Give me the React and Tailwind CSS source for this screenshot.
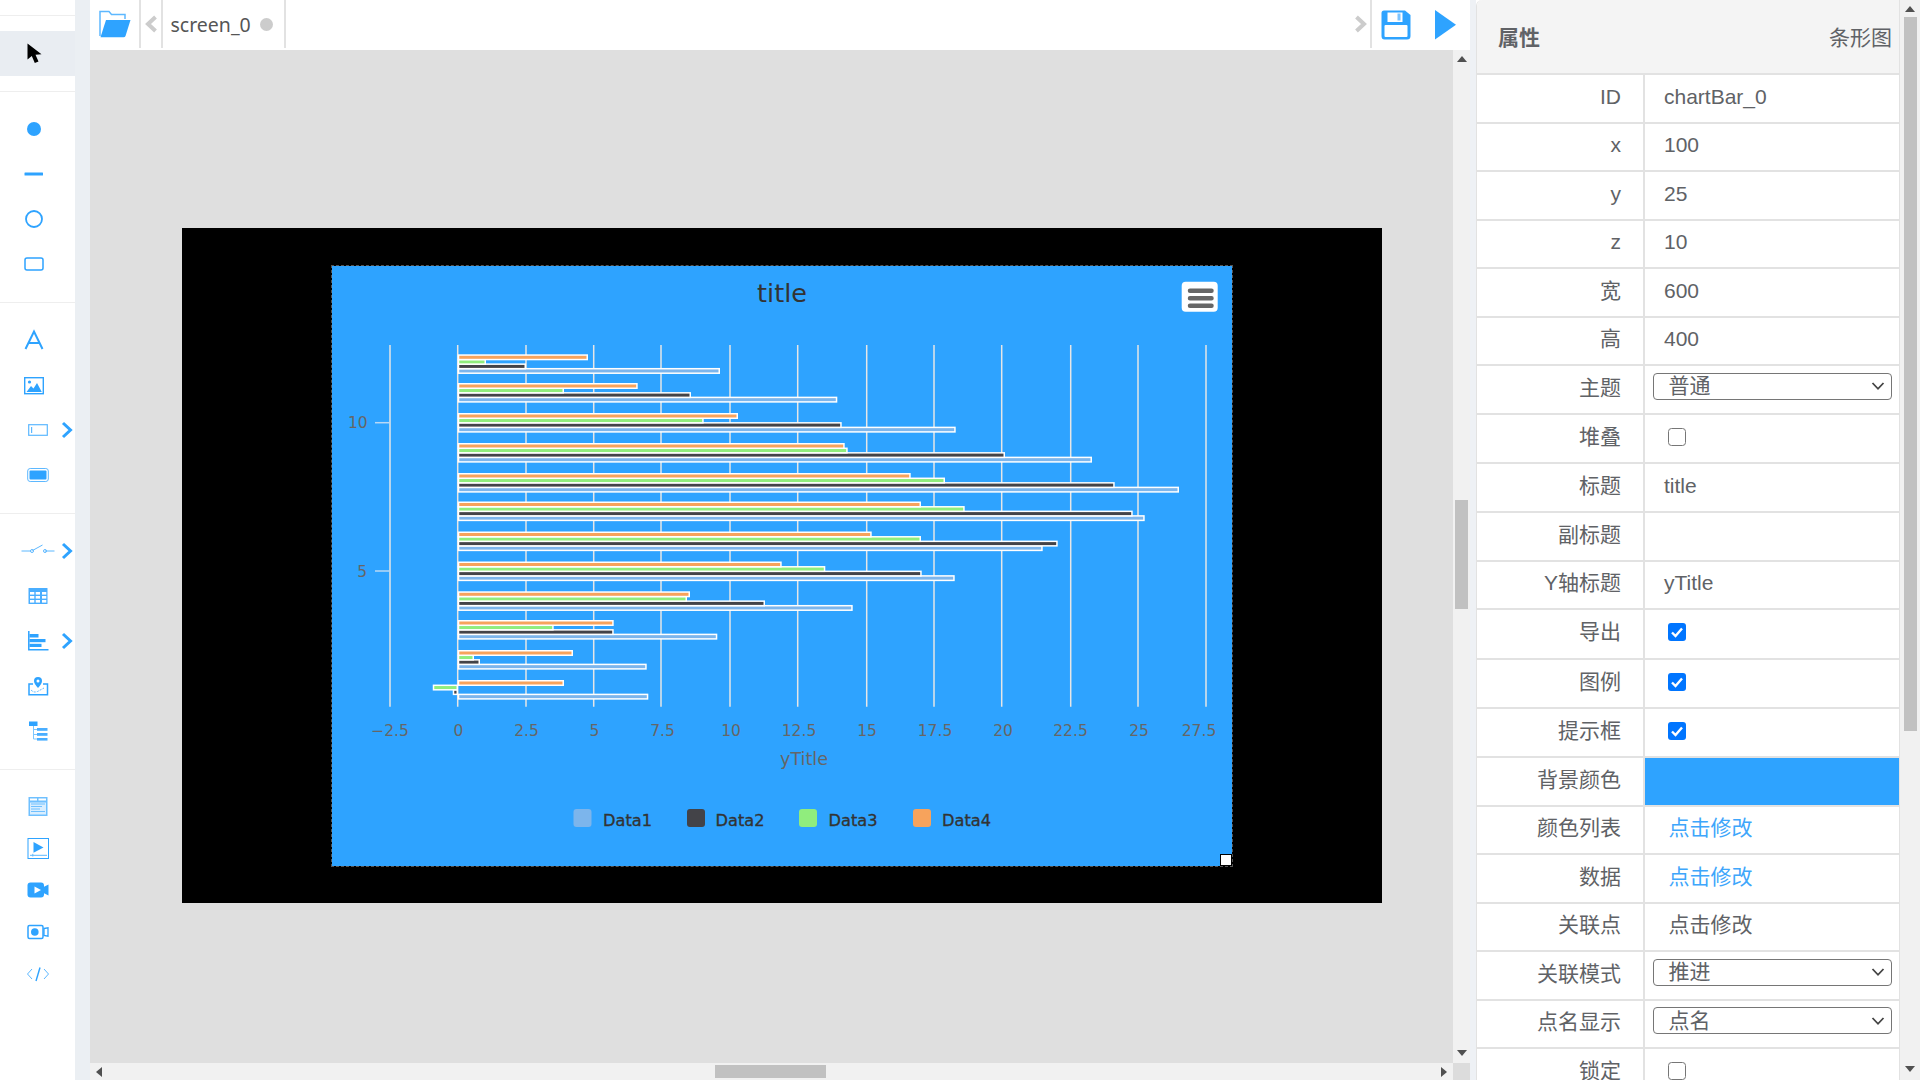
const BLUE = "#2ea3ff";

function Ic({ w = 28, children }) {
  return (
    <svg width={w} height="28" viewBox={`0 0 ${w} 28`} fill="none" className="shrink-0">
      {children}
    </svg>
  );
}

const icons = {
  dot: <Ic><circle cx="14" cy="14" r="7" fill={BLUE} /></Ic>,
  line: <Ic><rect x="4.5" y="12.5" width="18.5" height="3" rx="0.5" fill={BLUE} /></Ic>,
  ring: <Ic><circle cx="14" cy="14" r="8" stroke={BLUE} strokeWidth="1.8" /></Ic>,
  rect: <Ic><rect x="5" y="8" width="18" height="12" rx="2" stroke={BLUE} strokeWidth="1.5" /></Ic>,
  text: <Ic><path d="M5.5 23 L14 5.5 L22.5 23 M8.5 17 H19.5" stroke={BLUE} strokeWidth="2" /></Ic>,
  image: (
    <Ic>
      <rect x="4.7" y="6.7" width="18.6" height="16" stroke={BLUE} strokeWidth="1.4" />
      <circle cx="9.5" cy="11" r="1.6" fill={BLUE} />
      <path d="M6.5 21 L11 15 L13.5 17.5 L17 12 L21.8 21Z" fill={BLUE} />
    </Ic>
  ),
  input: (
    <Ic>
      <rect x="4.7" y="8.7" width="18.6" height="10.6" stroke="#5db8ff" strokeWidth="1.2" />
      <rect x="7" y="11" width="1.2" height="6" fill="#5db8ff" />
    </Ic>
  ),
  button: (
    <Ic>
      <rect x="3.7" y="7.5" width="20.6" height="13" rx="2.5" stroke="#5db8ff" strokeWidth="1" />
      <rect x="5.5" y="9.5" width="17" height="9" rx="1" fill={BLUE} />
    </Ic>
  ),
  sw: (
    <Ic w={40}>
      <path d="M3.5 14 H13 M14.5 13.5 L24.5 8 M27 14 H36.5" stroke="#5db8ff" strokeWidth="1" />
      <circle cx="14" cy="14" r="1.5" stroke="#5db8ff" strokeWidth="1" />
      <circle cx="27" cy="14" r="1.5" stroke="#5db8ff" strokeWidth="1" />
    </Ic>
  ),
  table: (
    <Ic>
      <rect x="4.5" y="6" width="19" height="16" rx="0.5" fill="#4aaeff" />
      {[10, 14, 18].map((y) =>
        [6, 11.7, 18].map((x) => <rect key={`${x}-${y}`} x={x} y={y} width="4.3" height="2.6" fill="#fff" />)
      )}
    </Ic>
  ),
  bar: (
    <Ic>
      <path d="M4.8 4 V22.8 H24.5" stroke={BLUE} strokeWidth="1.5" />
      <rect x="5.5" y="7" width="9" height="3.5" fill={BLUE} />
      <rect x="5.5" y="12" width="16" height="3.2" fill={BLUE} />
      <rect x="5.5" y="16.8" width="12" height="3.2" fill={BLUE} />
    </Ic>
  ),
  map: (
    <Ic>
      <path d="M9 12 H5 V22.7 H23.5 V12 H19" stroke={BLUE} strokeWidth="1.5" />
      <path d="M7 18 Q10 21 13.5 19.5 L20 16" stroke="#5db8ff" strokeWidth="1" strokeDasharray="2 1.2" />
      <path d="M14 16 C11.5 13 10 11.2 10 9 A4 4 0 0 1 18 9 C18 11.2 16.5 13 14 16Z" fill={BLUE} />
      <circle cx="14" cy="9" r="1.5" fill="#fff" />
    </Ic>
  ),
  tree: (
    <Ic>
      <rect x="5" y="4.5" width="8.5" height="4.5" fill={BLUE} />
      <path d="M9.5 9 V22 H13 M9.5 12.5 H13 M9.5 17.5 H13" stroke="#7cc6ff" strokeWidth="1" />
      <rect x="13" y="11" width="10.5" height="2.8" fill="#4aaeff" />
      <rect x="13" y="16" width="10.5" height="2.8" fill="#4aaeff" />
      <rect x="13" y="21" width="10.5" height="2.6" fill="#4aaeff" />
    </Ic>
  ),
  doc: (
    <Ic>
      <rect x="4.5" y="5" width="19" height="19" fill="#6fc0ff" />
      <rect x="6" y="6.5" width="7" height="2" fill="#fff" />
      <rect x="14.5" y="6.5" width="7.5" height="2" fill="#fff" />
      <rect x="6" y="10.5" width="16" height="12" fill="#d9eeff" />
      <path d="M7 12 H21 M7 14.5 H18 M7 17 H16 M7 19.5 H21" stroke="#6fc0ff" strokeWidth="1.2" />
    </Ic>
  ),
  play: (
    <Ic>
      <rect x="4" y="4.5" width="20.5" height="20" stroke={BLUE} strokeWidth="1" />
      <path d="M9.5 8 L19.5 13.5 L9.5 18.8Z" fill={BLUE} />
      <path d="M6 21.3 H23 M8.8 19.8 V22.5" stroke="#5db8ff" strokeWidth="1" />
    </Ic>
  ),
  video: (
    <Ic>
      <rect x="3.5" y="6.5" width="16.5" height="15" rx="3" fill={BLUE} />
      <path d="M19.5 11 L24.5 8.5 V19.5 L19.5 17Z" fill={BLUE} />
      <path d="M10.5 10.5 L17 14 L10.5 17.5Z" fill="#fff" />
    </Ic>
  ),
  record: (
    <Ic>
      <rect x="4" y="7.5" width="15" height="13" rx="1.5" stroke={BLUE} strokeWidth="1.5" />
      <circle cx="10.8" cy="14" r="3.8" fill={BLUE} />
      <path d="M20 10.5 L24 9.8 V18.2 L20 17.5Z" stroke={BLUE} strokeWidth="1.3" />
    </Ic>
  ),
  code: (
    <Ic>
      <path d="M8 9 L3.5 14 L8 19 M20 9 L24.5 14 L20 19" stroke="#5db8ff" strokeWidth="1" />
      <path d="M16 7.5 L12 21" stroke={BLUE} strokeWidth="1.4" />
    </Ic>
  ),
};

function Item({ icon, narrow, more, tall }) {
  return (
    <div className={`relative flex items-center ${tall ? "h-[42px]" : "h-[45px]"}`}>
      <div className={`flex justify-center ${narrow ? "w-[68px]" : "w-[75px]"}`}>{icons[icon]}</div>
      {more && (
        <svg width="12" height="18" viewBox="0 0 12 18" fill="none" className="absolute left-[61px] top-[14px]">
          <path d="M2 2 L9.5 9 L2 16" stroke={BLUE} strokeWidth="3" />
        </svg>
      )}
    </div>
  );
}

function Sidebar() {
  return (
    <div className="flex h-full w-[75px] shrink-0 flex-col bg-white">
      <div className="h-[16px] border-b border-[#eeeeee]" />
      <div className="mt-[15px] flex h-[45px] items-center justify-center bg-[#e9edf2] pb-[2px] pr-[6px]">
        <svg width="20" height="20" viewBox="0 0 20 20">
          <path d="M2.5 0.5 L2.5 16.5 L6.8 13 L9.8 20 L13.5 18.4 L10.5 11.8 L16.5 11.2 Z" fill="#000" />
        </svg>
      </div>
      <div className="mt-[15px] border-t border-[#eeeeee] pt-[14px] pb-[16px]">
        <Item icon="dot" narrow />
        <Item icon="line" narrow />
        <Item icon="ring" narrow />
        <Item icon="rect" narrow />
      </div>
      <div className="border-t border-[#eeeeee] pt-[14px] pb-[16px]">
        <Item icon="text" narrow />
        <Item icon="image" narrow />
        <Item icon="input" more />
        <Item icon="button" />
      </div>
      <div className="border-t border-[#eeeeee] pt-[14px] pb-[16px]">
        <Item icon="sw" more />
        <Item icon="table" />
        <Item icon="bar" more />
        <Item icon="map" />
        <Item icon="tree" />
      </div>
      <div className="border-t border-[#eeeeee] pt-[15px]">
        <Item icon="doc" tall />
        <Item icon="play" tall />
        <Item icon="video" tall />
        <Item icon="record" tall />
        <Item icon="code" tall />
      </div>
    </div>
  );
}

function TopBar() {
  return (
    <div className="flex h-[50px] shrink-0 items-start bg-white">
      <div className="flex h-[48px] w-[51px] items-center border-r-2 border-[#e2e2e2] pl-[9px]">
        <svg width="32" height="28" viewBox="0 0 32 28" fill="none">
          <path d="M1 26 V1.5 H10 L12.5 4.5 H26 V9" stroke="#5db8ff" strokeWidth="1.5" />
          <path d="M7 10 H31.5 L26.5 26 Q26 27.2 24.5 27.2 H1.5 Z" fill={BLUE} />
        </svg>
      </div>
      <div className="flex h-[48px] w-[22px] items-center justify-center border-r-2 border-[#e2e2e2]">
        <svg width="13" height="18" viewBox="0 0 13 18" fill="none">
          <path d="M10.5 2 L3 9 L10.5 16" stroke="#cccccc" strokeWidth="4" />
        </svg>
      </div>
      <div className="flex h-[48px] w-[122.5px] items-center border-r-2 border-[#e2e2e2] pl-[7.5px] pt-[1px] font-['Noto_Sans','Noto_Sans_CJK_SC',sans-serif] text-[19.5px] text-[#555555]">
        <span>screen_0</span>
        <span className="ml-[9px] h-[13.5px] w-[13.5px] rounded-full bg-[#cccccc]" />
      </div>
      <div className="flex h-[48px] flex-1 items-center justify-end border-r-2 border-[#e2e2e2] pr-[3px]">
        <svg width="13" height="18" viewBox="0 0 13 18" fill="none">
          <path d="M2.5 2 L10 9 L2.5 16" stroke="#cccccc" strokeWidth="4" />
        </svg>
      </div>
      <div className="ml-[9px] flex h-[48px] items-start pt-[10px]">
        <svg width="30" height="30" viewBox="0 0 30 30">
          <path d="M3 0.5 H24 L29.5 5 V26 Q29.5 29.5 26 29.5 H3.5 Q0.5 29.5 0.5 26 V3 Q0.5 0.5 3 0.5Z" fill={BLUE} />
          <rect x="6.5" y="2.5" width="15" height="9.5" fill="#fff" />
          <rect x="16.5" y="3.5" width="3" height="7" fill="#7cc4ff" />
          <rect x="3.5" y="15" width="23" height="12" rx="1" fill="#fff" />
        </svg>
      </div>
      <div className="ml-[24.5px] mr-[14px] flex h-[48px] items-start pt-[10px]">
        <svg width="21" height="30" viewBox="0 0 21 30">
          <path d="M0 0 L21 14.7 L0 29.5Z" fill={BLUE} />
        </svg>
      </div>
    </div>
  );
}

const gridXs = [390, 457.7, 526, 593.7, 661, 730, 797.7, 866.7, 934, 1001.7, 1070.7, 1138, 1206];
const xLabels = ["−2.5", "0", "2.5", "5", "7.5", "10", "12.5", "15", "17.5", "20", "22.5", "25", "27.5"];
const labelXs = [390, 458.5, 526.5, 594.5, 662.5, 731, 799, 867, 935, 1003, 1070.5, 1139, 1199];
const x0 = 458.5;
// orange, green, dark, blue outer right ends, by category from the top
const ends = [
  [588, 486, 526, 720],
  [637.7, 564, 691, 837.3],
  [738, 703.7, 841.7, 955.7],
  [844.7, 847.7, 1005, 1092],
  [910.7, 945, 1114.7, 1179],
  [921, 964.7, 1132.7, 1144.7],
  [871.7, 921, 1057.7, 1042.7],
  [781.7, 825.3, 921.7, 954.7],
  [690, 687, 765, 852.7],
  [613.7, 553.7, 613.7, 717.3],
  [573, 474, 480, 646.7],
  [564, 458, 458, 648.3],
];
const tops = [357.3, 386, 416, 446, 476, 504.5, 534.5, 564.5, 594.3, 623, 653, 683];
const colors = ["#f7a35c", "#90ed7d", "#434348", "#7cb5ec"];
const legend = [
  ["Data1", "#7cb5ec", 573.5, 603],
  ["Data2", "#434348", 687, 715.5],
  ["Data3", "#90ed7d", 799, 828.5],
  ["Data4", "#f7a35c", 913, 942],
];

function Bars() {
  const out = [];
  ends.forEach((row, g) => {
    [3, 2, 1, 0].forEach((s) => {
      const y = tops[g] + s * 4.55 - 2.25;
      let xa = x0;
      let xb = row[s] - 0.75;
      if (g === 11 && s === 1) xa = 433.5;
      if (g === 11 && s === 2) xa = 453.5;
      out.push(
        <rect key={`${g}-${s}`} x={xa} y={y} width={xb - xa} height="4.5" fill={colors[s]} stroke="#ffffff" strokeWidth="1.5" />
      );
    });
  });
  return out;
}

function Chart() {
  return (
    <svg width="900" height="600" viewBox="332 266 900 600" className="block font-['DejaVu_Sans',sans-serif]">
      <rect x="332" y="266" width="900" height="600" fill={BLUE} />
      <text x="782" y="301.5" textAnchor="middle" fill="#333333" className="text-[25.5px]">title</text>
      <rect x="1181.7" y="281.7" width="36" height="30" rx="4" fill="#ffffff" />
      <path d="M1190 290.7 H1211.5 M1190 298.2 H1211.5 M1190 305.7 H1211.5" stroke="#666666" strokeWidth="4.5" strokeLinecap="round" />
      {gridXs.map((x) => (
        <line key={x} x1={x} x2={x} y1="345" y2="706.7" stroke="#e6e6e6" strokeWidth="1.5" />
      ))}
      <line x1="375" x2="390" y1="422.7" y2="422.7" stroke="#b9d8f5" strokeWidth="1.5" />
      <line x1="375" x2="390" y1="571" y2="571" stroke="#b9d8f5" strokeWidth="1.5" />
      <Bars />
      <text x="367.7" y="427.7" textAnchor="end" fill="#666666" className="text-[15.5px]">10</text>
      <text x="367" y="577" textAnchor="end" fill="#666666" className="text-[15.5px]">5</text>
      {xLabels.map((t, i) => (
        <text key={t} x={labelXs[i]} y="736" textAnchor="middle" fill="#666666" className="text-[15.5px]">{t}</text>
      ))}
      <text x="804" y="765" textAnchor="middle" fill="#666666" className="text-[17.5px]">yTitle</text>
      {legend.map(([name, c, sx, tx]) => (
        <g key={name}>
          <rect x={sx} y="809" width="18" height="18" rx="3" fill={c} />
          <text x={tx} y="826" fill="#333333" stroke="#333333" strokeWidth="0.35" className="text-[16.2px]">{name}</text>
        </g>
      ))}
    </svg>
  );
}

function Arrow({ dir }) {
  const d = { up: "M0 7 L5 1 L10 7Z", down: "M0 1 L5 7 L10 1Z", left: "M7 0 L1 5 L7 10Z", right: "M1 0 L7 5 L1 10Z" }[dir];
  return (
    <svg width="10" height="10" viewBox="0 0 10 10" className="block">
      <path d={d} fill="#505050" />
    </svg>
  );
}

function Canvas() {
  return (
    <div className="flex min-h-0 flex-1 flex-col">
      <div className="flex min-h-0 flex-1">
        <div className="min-w-0 flex-1 overflow-hidden bg-[#dfdfdf] pl-[92px] pt-[178px]">
          <div className="h-[675px] w-[1200px] bg-black pl-[149px] pt-[37px]">
            <div className="relative w-[902px] border border-dashed border-[#555555]">
              <Chart />
              <div className="absolute bottom-0 right-0 h-[12px] w-[12px] border border-black bg-white" />
            </div>
          </div>
        </div>
        <div className="flex w-[17px] shrink-0 flex-col items-center bg-[#f1f1f1]">
          <div className="mt-[5px] h-[8px]"><Arrow dir="up" /></div>
          <div className="mt-[437px] h-[109px] w-[13px] bg-[#c1c1c1]" />
          <div className="mt-[440px]"><Arrow dir="down" /></div>
        </div>
      </div>
      <div className="flex h-[17px] shrink-0 items-center bg-[#f1f1f1]">
        <div className="ml-[5px]"><Arrow dir="left" /></div>
        <div className="ml-[610px] h-[13px] w-[111px] bg-[#c1c1c1]" />
        <div className="ml-[614px]"><Arrow dir="right" /></div>
        <div className="ml-auto h-[17px] w-[17px] bg-[#dcdcdc]" />
      </div>
    </div>
  );
}

function Box({ checked }) {
  if (checked) {
    return (
      <svg width="18" height="18" viewBox="0 0 18 18" className="ml-[23px] block">
        <rect width="18" height="18" rx="3" fill="#0075ff" />
        <path d="M4 9.5 L7.5 13 L14 5.5" fill="none" stroke="#fff" strokeWidth="2.4" />
      </svg>
    );
  }
  return <div className="ml-[23px] h-[18px] w-[18px] rounded-[3.5px] border-[1.5px] border-[#767676] bg-white" />;
}

function Sel({ text }) {
  return (
    <div className="mb-[3px] ml-[8px] flex h-[27px] w-[238.5px] items-center justify-between rounded-[4px] border-[1.5px] border-[#767676] pl-[14.5px] pr-[6px]">
      <span className="leading-[24px]">{text}</span>
      <svg width="14" height="10" viewBox="0 0 14 10" fill="none">
        <path d="M1.5 2 L7 7.8 L12.5 2" stroke="#444444" strokeWidth="1.8" />
      </svg>
    </div>
  );
}

const rows = [
  ["ID", "h-[49px]", "text", "chartBar_0"],
  ["x", "h-[48px]", "text", "100"],
  ["y", "h-[49px]", "text", "25"],
  ["z", "h-[48px]", "text", "10"],
  ["宽", "h-[49px]", "text", "600"],
  ["高", "h-[48px]", "text", "400"],
  ["主题", "h-[49px]", "sel", "普通"],
  ["堆叠", "h-[49px]", "box", false],
  ["标题", "h-[49px]", "text", "title"],
  ["副标题", "h-[49px]", "text", ""],
  ["Y轴标题", "h-[48px]", "text", "yTitle"],
  ["导出", "h-[50px]", "box", true],
  ["图例", "h-[49px]", "box", true],
  ["提示框", "h-[49px]", "box", true],
  ["背景颜色", "h-[49px]", "color", ""],
  ["颜色列表", "h-[48px]", "link", "点击修改"],
  ["数据", "h-[49px]", "link", "点击修改"],
  ["关联点", "h-[48px]", "plain", "点击修改"],
  ["关联模式", "h-[49px]", "sel", "推进"],
  ["点名显示", "h-[48px]", "sel", "点名"],
  ["锁定", "h-[49px]", "box", false],
];

function Value({ kind, v }) {
  if (kind === "text") return <span className="pl-[19px]">{v}</span>;
  if (kind === "link") return <span className="pl-[23.5px] text-[#3ea6fb]">{v}</span>;
  if (kind === "plain") return <span className="pl-[23.5px]">{v}</span>;
  if (kind === "sel") return <Sel text={v} />;
  if (kind === "box") return <Box checked={v} />;
  return <div className="h-full w-full bg-[#2ea3ff]" />;
}

function Panel() {
  return (
    <div className="flex h-full shrink-0">
      <div className="w-[6px] bg-[#eef1f5]" />
      <div className="w-[424px] overflow-hidden rounded-tl-[6px] border-x border-[#e2e2e2] bg-white font-['Liberation_Sans','Noto_Sans_CJK_SC',sans-serif] text-[21px] text-[#606266]">
        <div className="flex h-[73px] items-center justify-between bg-[#f4f4f4] pl-[21px] pr-[7px] pt-[3px]">
          <span className="font-bold">属性</span>
          <span>条形图</span>
        </div>
        {rows.map(([label, h, kind, v]) => (
          <div key={label} className={`flex ${h} border-t-2 border-[#e2e2e2]`}>
            <div className="flex w-[168px] shrink-0 items-center justify-end border-r-2 border-[#e2e2e2] pb-[4px] pr-[22px]">{label}</div>
            <div className={`flex min-w-0 flex-1 items-center ${kind === "color" ? "" : "pb-[4px]"}`}>
              <Value kind={kind} v={v} />
            </div>
          </div>
        ))}
      </div>
      <div className="flex w-[20px] shrink-0 flex-col items-center bg-[#f1f1f1]">
        <div className="mt-[5px] h-[12px]"><Arrow dir="up" /></div>
        <div className="h-[714px] w-[13px] bg-[#c1c1c1]" />
        <div className="mt-[334px]"><Arrow dir="down" /></div>
      </div>
    </div>
  );
}

export default function App() {
  return (
    <div className="flex h-[1080px] w-[1920px] overflow-hidden bg-white">
      <Sidebar />
      <div className="w-[15px] shrink-0 bg-[#ebeff3]" />
      <div className="flex h-full w-[1380px] shrink-0 flex-col">
        <TopBar />
        <Canvas />
      </div>
      <Panel />
    </div>
  );
}
